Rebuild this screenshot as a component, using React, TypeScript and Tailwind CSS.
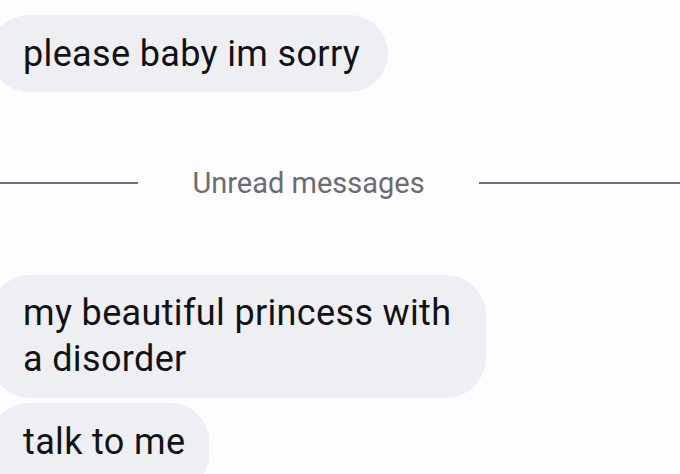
import React from 'react';

const Bubble: React.FC<{ className?: string; children: React.ReactNode }> = ({ className = '', children }) => (
  <div className={`shrink-0 -ml-[10px] bg-[#eeeff3] text-[#121214] text-[36px] leading-[46px] tracking-[0.35px] whitespace-nowrap pl-[33px] ${className}`}>
    {children}
  </div>
);

const App: React.FC = () => {
  return (
    <div
      className="w-[680px] h-[474px] overflow-hidden bg-[#fdfcfe] flex flex-col"
      style={{ fontFamily: 'Roboto, "Liberation Sans", sans-serif' }}
    >
      <Bubble className="mt-[15px] h-[77px] w-[398px] rounded-[39px] flex items-center">
        please baby im sorry
      </Bubble>

      <div className="shrink-0 mt-[76px] flex items-center h-[30px]">
        <div className="w-[138px] h-[2px] bg-[#717175]" />
        <div className="flex-1 text-center text-[29px] text-[#6c6c70] leading-none">Unread messages</div>
        <div className="w-[201px] h-[2px] bg-[#717175]" />
      </div>

      <Bubble className="mt-[77px] w-[496px] h-[123px] rounded-[40px] pt-[15px]">
        my beautiful princess with
        <br />
        a disorder
      </Bubble>

      <Bubble className="mt-[5px] w-[219px] h-[90px] rounded-[38px] pt-[16px]">
        talk to me
      </Bubble>
    </div>
  );
};

export default App;
